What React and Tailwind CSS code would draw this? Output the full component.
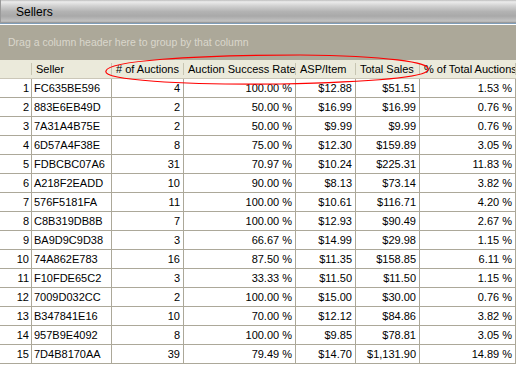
import React from "react";

const rows = [
  ["FC635BE596", "4", "100.00 %", "$12.88", "$51.51", "1.53 %"],
  ["883E6EB49D", "2", "50.00 %", "$16.99", "$16.99", "0.76 %"],
  ["7A31A4B75E", "2", "50.00 %", "$9.99", "$9.99", "0.76 %"],
  ["6D57A4F38E", "8", "75.00 %", "$12.30", "$159.89", "3.05 %"],
  ["FDBCBC07A6", "31", "70.97 %", "$10.24", "$225.31", "11.83 %"],
  ["A218F2EADD", "10", "90.00 %", "$8.13", "$73.14", "3.82 %"],
  ["576F5181FA", "11", "100.00 %", "$10.61", "$116.71", "4.20 %"],
  ["C8B319DB8B", "7", "100.00 %", "$12.93", "$90.49", "2.67 %"],
  ["BA9D9C9D38", "3", "66.67 %", "$14.99", "$29.98", "1.15 %"],
  ["74A862E783", "16", "87.50 %", "$11.35", "$158.85", "6.11 %"],
  ["F10FDE65C2", "3", "33.33 %", "$11.50", "$11.50", "1.15 %"],
  ["7009D032CC", "2", "100.00 %", "$15.00", "$30.00", "0.76 %"],
  ["B347841E16", "10", "70.00 %", "$12.12", "$84.86", "3.82 %"],
  ["957B9E4092", "8", "100.00 %", "$9.85", "$78.81", "3.05 %"],
  ["7D4B8170AA", "39", "79.49 %", "$14.70", "$1,131.90", "14.89 %"],
];

const headers = ["", "Seller", "# of Auctions", "Auction Success Rate", "ASP/Item", "Total Sales", "% of Total Auctions"];

const cols = "grid grid-cols-[32px_80px_72px_112px_60px_64px_96px]";

export default function App() {
  return (
    <div
      className="relative w-[516px] h-[365px] overflow-hidden bg-white text-[11px] text-black"
      style={{ fontFamily: '"Liberation Sans", Arial, sans-serif' }}
    >
      {/* Title bar */}
      <div className="h-[23px] flex items-center pl-[15px] border-l border-[#9a9a9a] bg-[linear-gradient(to_bottom,#bdbdbd_0%,#ececec_8%,#d2d2d2_25%,#b3b3b3_50%,#a9a9a9_70%,#c2c2c2_92%,#8c8c8c_100%)] text-[12px]">
        Sellers
      </div>
      <div className="h-px bg-[#7f9db9]" />
      <div className="h-px bg-white" />
      {/* Group area */}
      <div className="h-[35px] bg-[#aca899] flex items-center pl-[8px] text-[10.5px] text-[#dad7cc]">
        Drag a column header here to group by that column
      </div>
      {/* Header */}
      <div className={`${cols} h-[19px] bg-[#ebeadb] border-b border-[#cbc7b8]`}>
        {headers.map((h, i) => (
          <div key={i} className="relative flex items-center pl-[4px] whitespace-nowrap overflow-hidden">
            {h}
            <div className="absolute right-0 top-[3px] bottom-[3px] w-px bg-[#c7c5b2]" />
            <div className="absolute right-[-1px] top-[3px] bottom-[3px] w-px bg-white" />
          </div>
        ))}
      </div>
      {/* Rows */}
      {rows.map((r, i) => (
        <div key={i} className={`${cols} h-[19px]`}>
          <div className="border-r border-b border-[#aca899] text-right pr-[2px] leading-[18px]">{i + 1}</div>
          <div className="border-r border-b border-[#aca899] pl-[2px] leading-[18px]">{r[0]}</div>
          {r.slice(1).map((v, j) => (
            <div key={j} className="border-r border-b border-[#aca899] text-right pr-[3px] leading-[18px] whitespace-nowrap">
              {v}
            </div>
          ))}
        </div>
      ))}
      {/* Red annotation ellipse */}
      <svg className="absolute left-0 top-0 pointer-events-none" width="516" height="365">
        <path
          d="M106,71 C108,61 190,55 300,55 C385,56 432,62 428,70 C425,78 370,82 280,84 C180,85 102,80 106,71 Z"
          fill="none"
          stroke="#ff0000"
          strokeWidth="1.2"
        />
      </svg>
    </div>
  );
}
